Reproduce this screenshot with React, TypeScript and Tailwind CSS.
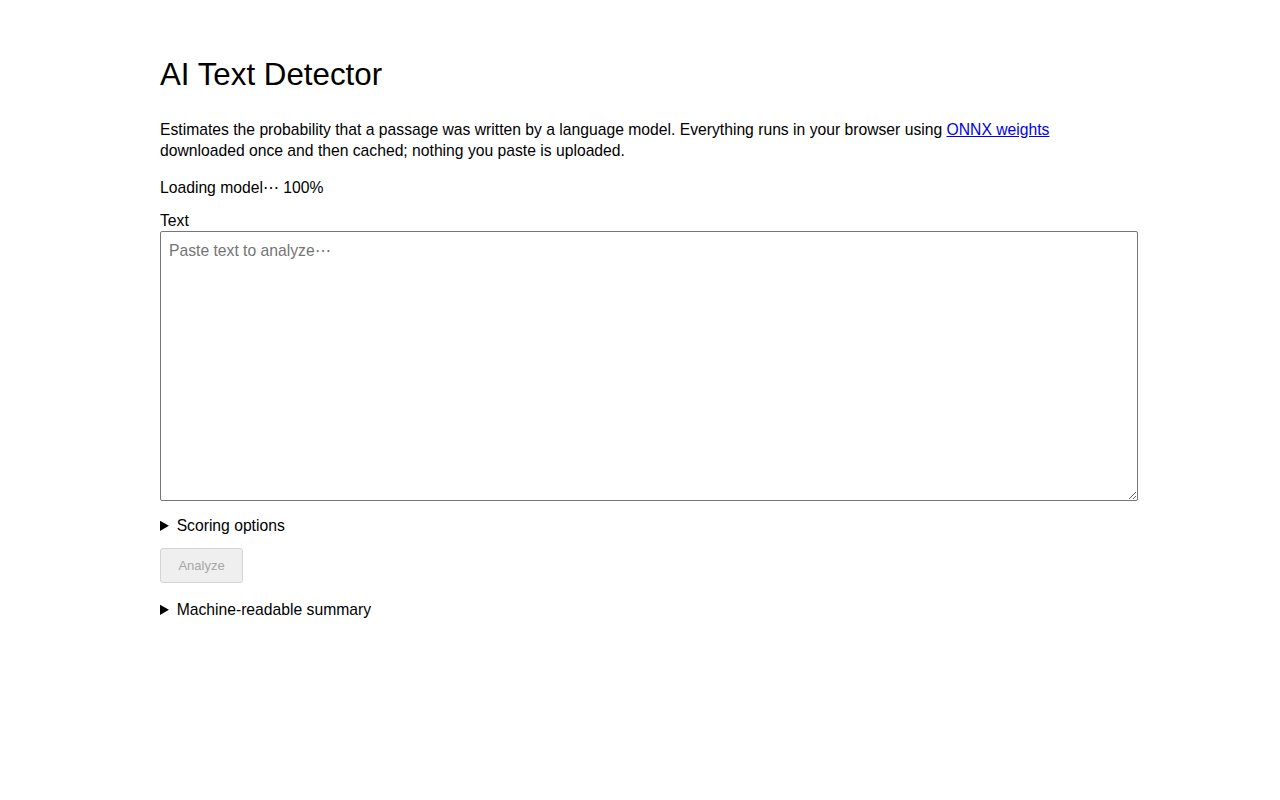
import React, { useState } from 'react';

export default function App() {
  const [text, setText] = useState('');

  return (
    <div className="min-h-screen bg-white text-black font-['Liberation_Sans',Arial,sans-serif] text-[15.7px] leading-[21px]">
      <main className="w-[978px] ml-[160px] pt-[57px]">
        <h1 className="text-[31.3px] leading-[36px] font-normal">AI Text Detector</h1>

        <p className="mt-[26px]">
          Estimates the probability that a passage was written by a language model. Everything runs in your browser
          using{' '}
          <a href="#" className="text-[#0000ee] underline">
            ONNX weights
          </a>{' '}
          downloaded once and then cached; nothing you paste is uploaded.
        </p>

        <p className="mt-[16px]">Loading model{'\u22EF'} 100%</p>

        <label htmlFor="input" className="block mt-[12px]">
          Text
        </label>
        <textarea
          id="input"
          value={text}
          onChange={(e) => setText(e.target.value)}
          placeholder={'Paste text to analyze\u22EF'}
          className="block w-full h-[270px] border border-[#767676] rounded-[2px] px-[8px] pt-[8px] pb-[6px] text-[15.7px] leading-[21px] placeholder:text-[#757575] resize-y outline-none"
        />

        <details className="mt-[14px]">
          <summary className="cursor-pointer">Scoring options</summary>
        </details>

        <button
          disabled
          className="block mt-[12px] w-[83px] h-[35px] bg-[#efefef] border border-[#d4d4d4] rounded-[3px] text-[13px] text-[#a6a6a6]"
        >
          Analyze
        </button>

        <details className="mt-[16px]">
          <summary className="cursor-pointer">Machine-readable summary</summary>
        </details>
      </main>
    </div>
  );
}
